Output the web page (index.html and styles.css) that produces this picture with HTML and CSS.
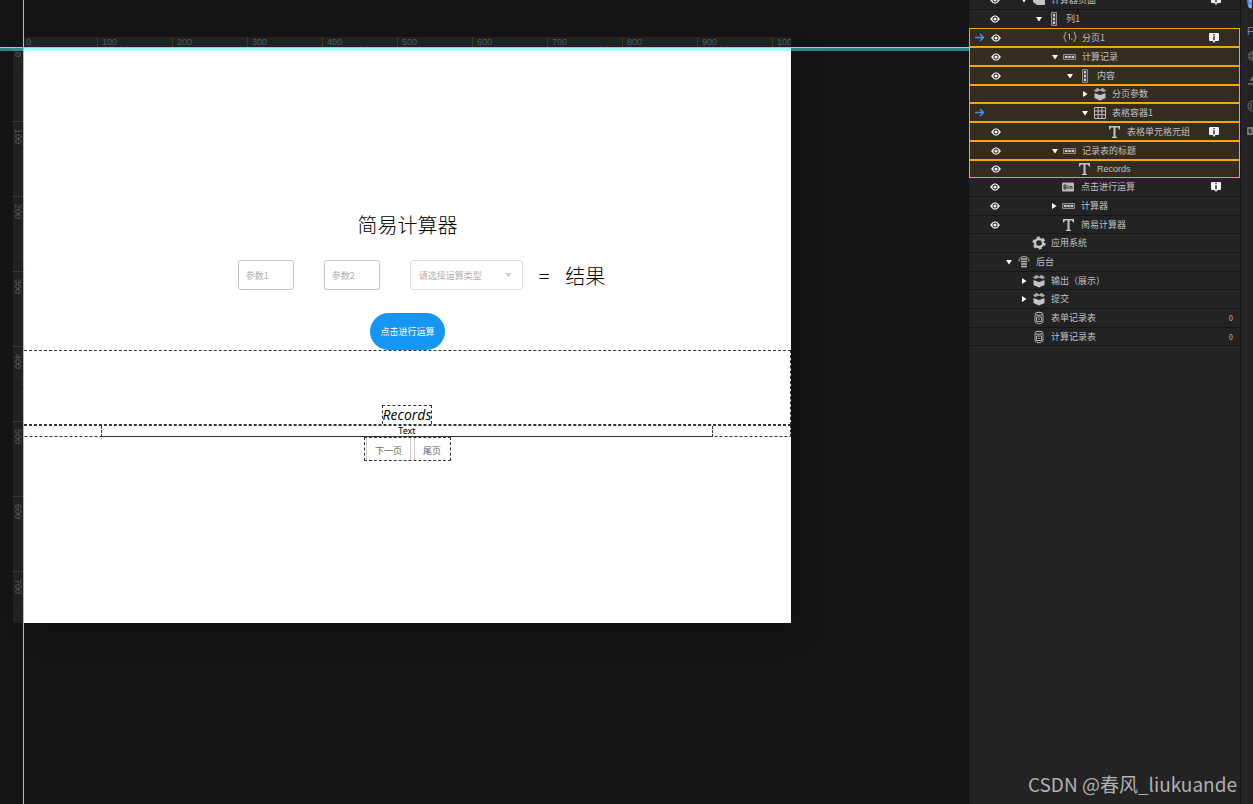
FILE: index.html
```html
<!DOCTYPE html>
<html lang="zh-CN">
<head>
<meta charset="utf-8">
<title>简易计算器</title>
<link rel="stylesheet" href="styles.css">
</head>
<body>
<svg class="sprite" aria-hidden="true">
  <symbol id="eye" viewBox="0 0 12 10"><path d="M1 5Q6-2.4 11 5Q6 12.400 1 5Z" fill="#eee"/><circle cx="6" cy="5" r="2.500" fill="#222"/><circle cx="6" cy="5" r="1.600" fill="#eee"/></symbol>
  <symbol id="down" viewBox="0 0 8 8"><path d="M1 2h6L4 6.500z" fill="#fff"/></symbol>
  <symbol id="right" viewBox="0 0 8 8"><path d="M2 1l4.500 3L2 7z" fill="#fff"/></symbol>
  <symbol id="link" viewBox="0 0 12 12"><path d="M1 5.500h8.500M6 2L9.500 5.500L6 9" fill="none" stroke="#4f8cf5" stroke-width="1.400"/></symbol>
  <symbol id="info" viewBox="0 0 12 12"><path d="M2 1h8q1 0 1 1v6q0 1-1 1H7.500L6 11L4.500 9H2q-1 0-1-1V2q0-1 1-1z" fill="#f4f4f4"/><path d="M6 2v1.300M6 4.200v4" stroke="#222" stroke-width="1.400"/></symbol>
  <symbol id="column" viewBox="0 0 16 14"><path d="M5.500 .5h5v13h-5z" fill="#444" stroke="#8e8e8e"/><path d="M7 2h2v2.500H7zM7 5.800h2v2.500H7zM7 9.600h2v2.500H7z" fill="#ccc"/></symbol>
  <symbol id="rowbox" viewBox="0 0 16 14"><path d="M1.500 4.500h12v5h-12z" fill="#444" stroke="#8e8e8e"/><path d="M3 6h2.500v2H3zM6.300 6h2.500v2H6.300zM9.600 6h2.500v2H9.600z" fill="#ccc"/></symbol>
  <symbol id="page" viewBox="0 0 16 14"><path d="M2 6L7 1h7v11H6L2 9z" fill="#c4c4c4"/><path d="M2 6h5V1" fill="none" stroke="#333"/></symbol>
  <symbol id="pager" viewBox="0 0 16 14"><path d="M4.500 1Q3 1 3 3.500T1.500 6Q3 6.500 3 8.500T4.500 10.500M11.500 1Q13 1 13 3.500T14.500 6Q13 6.500 13 8.500T11.500 10.500M6 4L7.500 3V8.500M9 8h1.500" fill="none" stroke="#b5b5b5"/></symbol>
  <symbol id="box" viewBox="0 0 16 14"><path d="M2.500 6L8 8L13.500 6v5L8 13.500L2.500 11z" fill="#c4c4c4"/><path d="M2 3.500L5.500 .8L8 2.800L10.500 .8L14 3.500L12 5L8 3.800L4 5z" fill="#aaa"/><path d="M3 5.500L8 7.500L13 5.500" fill="none" stroke="#333" stroke-width=".8"/></symbol>
  <symbol id="grid" viewBox="0 0 16 14"><path d="M2.500 1.500h11v11h-11zM2.500 5h11M2.500 8.700h11M6.200 1.500v11M9.900 1.500v11" fill="none" stroke="#c0c0c0"/></symbol>
  <symbol id="type" viewBox="0 0 16 14"><path d="M2 1h11v3.500h-1L11 2.500H8.500v9l1.500 .5v1H5v-1l1.500-.5v-9H4L3 4.500H2z" fill="#c4c4c4"/></symbol>
  <symbol id="button" viewBox="0 0 16 14"><rect x="1" y="2.500" width="12" height="9" rx="1" fill="#b9b9b9"/><path d="M3 5v4h2V5H3M3 7h2M7 6.500V9M7 5v1M9 9V6.500h2V9" fill="none" stroke="#333"/></symbol>
  <symbol id="gear" viewBox="0 0 16 14"><circle cx="8" cy="7" r="4" fill="none" stroke="#c4c4c4" stroke-width="2.400"/><circle cx="8" cy="7" r="5.700" fill="none" stroke="#c4c4c4" stroke-width="1.800" stroke-dasharray="3 2.970"/></symbol>
  <symbol id="server" viewBox="0 0 16 14"><path d="M4 6Q2 6 3.500 4Q4 1.500 8 1.500T12.500 4Q14 6 12 6" fill="none" stroke="#aaa"/><path d="M5 4h6M5 6.500h6M5 9h6M5 11.500h6" stroke="#bbb" stroke-width="1.600"/></symbol>
  <symbol id="data" viewBox="0 0 16 14"><ellipse cx="8" cy="2.800" rx="4" ry="1.500" fill="none" stroke="#bbb"/><path d="M4 4v7Q8 14.500 12 11V4M5.500 6h5v4.500h-5zM7 8.200h2" fill="none" stroke="#aaa"/></symbol>
</svg>

<main class="workspace">
  <div class="ruler ruler-x" aria-hidden="true"><span>0</span><span>100</span><span>200</span><span>300</span><span>400</span><span>500</span><span>600</span><span>700</span><span>800</span><span>900</span><span>100</span></div>
  <div class="ruler ruler-y" aria-hidden="true"><span>0</span><span>100</span><span>200</span><span>300</span><span>400</span><span>500</span><span>600</span><span>700</span></div>
  <section class="artboard">
    <h1 class="title">简易计算器</h1>
    <form class="calculator">
      <input class="field" type="text" placeholder="参数1" aria-label="参数1">
      <input class="field" type="text" placeholder="参数2" aria-label="参数2">
      <span class="picker">
        <select class="picker-select" aria-label="请选择运算类型"><option>请选择运算类型</option></select>
        <svg class="picker-caret" viewBox="0 0 8 5"><path d="M0 0h8L4 5z" fill="#c0c8dc"/></svg>
      </span>
      <span class="answer">=</span>
      <output class="answer">结果</output>
    </form>
    <button class="submit" type="button">点击进行运算</button>
    <div class="records-heading"><h2 class="records-title">Records</h2></div>
    <div class="records-body"><div class="records-table">Text</div></div>
    <nav class="pagination"><button class="page-button" type="button">下一页</button><button class="page-button" type="button">尾页</button></nav>
  </section>
  <div class="guide-x"></div>
  <div class="guide-y"></div>
</main>

<aside class="sidebar">
  <div class="tree">
    <div class="group group-top">
      <div class="row level-1"><span class="link"></span><button class="eye" aria-label="显示"><svg><use href="#eye"/></svg></button><button class="caret" aria-label="折叠"><svg><use href="#down"/></svg></button><svg class="icon"><use href="#page"/></svg><span class="label">计算器页面</span><svg class="info"><use href="#info"/></svg></div>
      <div class="row level-2"><span class="link"></span><button class="eye" aria-label="显示"><svg><use href="#eye"/></svg></button><button class="caret" aria-label="折叠"><svg><use href="#down"/></svg></button><svg class="icon"><use href="#column"/></svg><span class="label">列1</span></div>
    </div>
    <div class="group group-selected">
      <div class="row level-3"><span class="link"><svg><use href="#link"/></svg></span><button class="eye" aria-label="显示"><svg><use href="#eye"/></svg></button><span class="caret"></span><svg class="icon"><use href="#pager"/></svg><span class="label">分页1</span><svg class="info"><use href="#info"/></svg></div>
      <div class="row level-3"><span class="link"></span><button class="eye" aria-label="显示"><svg><use href="#eye"/></svg></button><button class="caret" aria-label="折叠"><svg><use href="#down"/></svg></button><svg class="icon"><use href="#rowbox"/></svg><span class="label">计算记录</span></div>
      <div class="row level-4"><span class="link"></span><button class="eye" aria-label="显示"><svg><use href="#eye"/></svg></button><button class="caret" aria-label="折叠"><svg><use href="#down"/></svg></button><svg class="icon"><use href="#column"/></svg><span class="label">内容</span></div>
      <div class="row level-5"><span class="link"></span><span class="eye"></span><button class="caret" aria-label="展开"><svg><use href="#right"/></svg></button><svg class="icon"><use href="#box"/></svg><span class="label">分页参数</span></div>
      <div class="row level-5"><span class="link"><svg><use href="#link"/></svg></span><span class="eye"></span><button class="caret" aria-label="折叠"><svg><use href="#down"/></svg></button><svg class="icon"><use href="#grid"/></svg><span class="label">表格容器1</span></div>
      <div class="row level-6"><span class="link"></span><button class="eye" aria-label="显示"><svg><use href="#eye"/></svg></button><span class="caret"></span><svg class="icon"><use href="#type"/></svg><span class="label">表格单元格元组</span><svg class="info"><use href="#info"/></svg></div>
      <div class="row level-3"><span class="link"></span><button class="eye" aria-label="显示"><svg><use href="#eye"/></svg></button><button class="caret" aria-label="折叠"><svg><use href="#down"/></svg></button><svg class="icon"><use href="#rowbox"/></svg><span class="label">记录表的标题</span></div>
      <div class="row level-4"><span class="link"></span><button class="eye" aria-label="显示"><svg><use href="#eye"/></svg></button><span class="caret"></span><svg class="icon"><use href="#type"/></svg><span class="label label-latin">Records</span></div>
    </div>
    <div class="group group-rest">
      <div class="row level-3"><span class="link"></span><button class="eye" aria-label="显示"><svg><use href="#eye"/></svg></button><span class="caret"></span><svg class="icon"><use href="#button"/></svg><span class="label">点击进行运算</span><svg class="info"><use href="#info"/></svg></div>
      <div class="row level-3"><span class="link"></span><button class="eye" aria-label="显示"><svg><use href="#eye"/></svg></button><button class="caret" aria-label="展开"><svg><use href="#right"/></svg></button><svg class="icon"><use href="#rowbox"/></svg><span class="label">计算器</span></div>
      <div class="row level-3"><span class="link"></span><button class="eye" aria-label="显示"><svg><use href="#eye"/></svg></button><span class="caret"></span><svg class="icon"><use href="#type"/></svg><span class="label">简易计算器</span></div>
      <div class="row level-1"><span class="link"></span><span class="eye"></span><span class="caret"></span><svg class="icon"><use href="#gear"/></svg><span class="label">应用系统</span></div>
      <div class="row level-0"><span class="link"></span><span class="eye"></span><button class="caret" aria-label="折叠"><svg><use href="#down"/></svg></button><svg class="icon"><use href="#server"/></svg><span class="label">后台</span></div>
      <div class="row level-1"><span class="link"></span><span class="eye"></span><button class="caret" aria-label="展开"><svg><use href="#right"/></svg></button><svg class="icon"><use href="#box"/></svg><span class="label">输出（展示）</span></div>
      <div class="row level-1"><span class="link"></span><span class="eye"></span><button class="caret" aria-label="展开"><svg><use href="#right"/></svg></button><svg class="icon"><use href="#box"/></svg><span class="label">提交</span></div>
      <div class="row level-1"><span class="link"></span><span class="eye"></span><span class="caret"></span><svg class="icon"><use href="#data"/></svg><span class="label">表单记录表</span><span class="count">0</span></div>
      <div class="row level-1"><span class="link"></span><span class="eye"></span><span class="caret"></span><svg class="icon"><use href="#data"/></svg><span class="label">计算记录表</span><span class="count">0</span></div>
    </div>
  </div>
  <p class="watermark">CSDN @春风_liukuande</p>
</aside>

<nav class="rail">
  <svg viewBox="0 0 12 12"><path d="M0 0h5v9l-4-2z" fill="#4f8cf5"/><path d="M2 1h3M3 4v4" stroke="#bcd2ff"/></svg>
  <span class="rail-text">F</span>
  <svg viewBox="0 0 12 12"><circle cx="6" cy="6" r="5" fill="#6a6a6a"/><path d="M0 6h12M4 1v10" stroke="#2d2d2d"/></svg>
  <svg viewBox="0 0 12 12"><path d="M1 9h10M3 5h8M5 2v3" fill="none" stroke="#777" stroke-width="1.500"/></svg>
  <svg viewBox="0 0 12 12"><circle cx="6" cy="6" r="5" fill="none" stroke="#777"/><path d="M4 3v6" stroke="#777"/></svg>
  <svg viewBox="0 0 12 12"><rect y="2" width="12" height="8" rx="1" fill="#777"/><path d="M4 4.500H2V6h2v1.500H2" fill="none" stroke="#222"/></svg>
</nav>
</body>
</html>
```
FILE: styles.css
```css
* { box-sizing: border-box; }

body {
  display: flex;
  min-height: 100vh;
  margin: 0;
  overflow: hidden;
  background: #151515;
  color: #c0c0c0;
  font-family: "Noto Sans CJK SC", "Noto Sans", sans-serif;
  font-size: 9px;
}

button {
  padding: 0;
  border: 0;
  background: none;
  color: inherit;
  font: inherit;
}

h1, h2, p { margin: 0; }

.sprite {
  position: absolute;
  width: 0;
  height: 0;
}

/* Workspace */
.workspace {
  position: relative;
  flex: 1;
  min-width: 0;
  display: grid;
  grid-template-columns: 11px 1fr;
  grid-template-rows: 11px auto;
  align-content: start;
  padding: 37px 178px 40px 13px;
  overflow: hidden;
}

.ruler {
  display: flex;
  overflow: hidden;
  background-color: #232323;
  color: #5c5c5c;
  font-family: "Liberation Sans", sans-serif;
  line-height: 11px;
}

.ruler span {
  flex: none;
}

.ruler-x {
  grid-column: 2;
  background-image: linear-gradient(90deg, #303030 1px, transparent 1px, transparent 8px, #2c2c2c 8px, #2c2c2c 9px, transparent 9px);
  background-position: -2px 8px;
  background-repeat: repeat-x;
  background-size: 15px 3px;
}

.ruler-x span {
  width: 75px;
  padding-left: 4px;
  border-left: 1px solid #4a3820;
}

.ruler-x span:first-child {
  width: 73px;
  padding-left: 2px;
  border: 0;
}

.ruler-y {
  grid-column: 1;
  flex-direction: column;
  height: 0;
  min-height: 100%;
  background-image: linear-gradient(#303030 1px, transparent 1px, transparent 8px, #2c2c2c 8px, #2c2c2c 9px, transparent 9px);
  background-position: 7px -2px;
  background-repeat: repeat-y;
  background-size: 3px 15px;
}

.ruler-y span {
  width: 10px;
  height: 75px;
  padding-top: 7px;
  border-top: 1px solid #4a3820;
  line-height: 10px;
  writing-mode: vertical-rl;
}

.ruler-y span:first-child {
  height: 73px;
  padding-top: 4px;
  border: 0;
}

.artboard {
  display: flex;
  flex-direction: column;
  align-items: center;
  min-height: 575px;
  padding-top: 162px;
  background: #fff;
  box-shadow: 8px 10px 30px rgba(0, 0, 0, .2);
  color: #000;
}

.title {
  font-size: 20px;
  font-weight: 300;
  line-height: 30px;
}

.calculator {
  display: flex;
  align-items: flex-start;
  gap: 16px;
  margin-top: 20px;
  padding-left: 28px;
}

.field {
  width: 56px;
  height: 30px;
  margin-right: 14px;
  padding: 0 7px;
  border: 1px solid #c4c4c4;
  border-radius: 3px;
  background: #fff;
  font: inherit;
}

.field::placeholder { color: #b0b0b0; }

.picker {
  position: relative;
  width: 113px;
}

.picker-select {
  display: block;
  width: 100%;
  height: 30px;
  padding: 0 8px;
  border: 1px solid #dcdfe6;
  border-radius: 3px;
  appearance: none;
  background: #fff;
  color: #b0b0b0;
  font: inherit;
}

.picker-caret {
  position: absolute;
  top: 13px;
  right: 11px;
  width: 7px;
  height: 4px;
}

.answer {
  height: 30px;
  font-size: 20px;
  font-weight: 300;
  line-height: 32px;
}

.submit {
  width: 75px;
  height: 37px;
  margin-top: 23px;
  border-radius: 19px;
  background: #1696f3;
  color: #fff;
}

.records-heading {
  align-self: stretch;
  display: flex;
  justify-content: center;
  align-items: flex-end;
  height: 75px;
  border: 1px dashed #333;
  border-left: 0;
}

.records-title {
  border: 1px dashed #333;
  border-bottom: 0;
  font-family: "Open Sans", sans-serif;
  font-size: 14px;
  font-style: italic;
  font-weight: 400;
  line-height: 18px;
}

.records-body {
  align-self: stretch;
  display: flex;
  justify-content: center;
  border: 1px dashed #333;
  border-width: 1px 1px 0 0;
  background: linear-gradient(90deg, #333 3px, transparent 3px) bottom / 5px 1px repeat-x;
}

.records-table {
  width: 80%;
  border: 1px dashed #333;
  border-style: solid dashed;
  border-top: 0;
  font-family: "Noto Sans", sans-serif;
  line-height: 10px;
  text-align: center;
}

.pagination {
  display: flex;
  gap: 3px;
  padding: 0 1px;
  border: 1px dashed #333;
}

.page-button {
  height: 22px;
  padding: 3px 8px 0;
  border: solid #ccc;
  border-width: 0 1px;
  color: #666;
}

.page-button:last-child { border-right: 0; }

.guide-x {
  position: absolute;
  top: 47px;
  left: 0;
  right: 0;
  height: 4px;
  border-top: 1px solid #40f6f6;
  background: rgba(64, 250, 255, .5);
}

.guide-y {
  position: absolute;
  top: 0;
  bottom: 0;
  left: 23px;
  width: 1px;
  background: #40f0f0;
}

/* Layer tree */
.sidebar {
  flex: none;
  display: flex;
  flex-direction: column;
  justify-content: space-between;
  width: 272px;
  border-right: 1px solid #161616;
  background: #232323;
}

.tree { margin-top: -9px; }

.row {
  display: flex;
  align-items: center;
  height: 19px;
  padding-right: 18px;
  border-bottom: 1px solid #161616;
  line-height: 16px;
}

.group-top .row:last-child,
.group-selected .row:nth-child(4n),
.group-rest .row:nth-child(3n) { height: 18px; }

.group-top .row:last-child { border-bottom: 0; }

.group-selected .row {
  border: 1px solid #ffa500;
  background: #352c20;
}

.link {
  flex: none;
  width: 20px;
  padding-left: 4px;
}

.link svg {
  display: block;
  width: 12px;
  height: 12px;
}

.eye {
  flex: none;
  width: 12px;
}

.eye svg {
  display: block;
  width: 12px;
  height: 10px;
}

.caret {
  flex: none;
  width: 10px;
  padding-left: 1px;
}

.caret svg {
  display: block;
  width: 8px;
  height: 8px;
}

.level-0 .caret { margin-left: 3px; }
.level-1 .caret { margin-left: 18px; }
.level-2 .caret { margin-left: 33px; }
.level-3 .caret { margin-left: 48px; }
.level-4 .caret { margin-left: 63px; }
.level-5 .caret { margin-left: 78px; }
.level-6 .caret { margin-left: 93px; }

.icon {
  flex: none;
  width: 16px;
  height: 14px;
  margin: 0 4px 0 2px;
}

.label {
  flex: 1;
  white-space: nowrap;
}

.label-latin { font-family: "Liberation Sans", sans-serif; }

.info {
  flex: none;
  width: 12px;
  height: 12px;
}

.group-selected .info { margin-right: 1px; }

.count {
  margin-right: -11px;
  font-size: 7px;
}

.watermark {
  padding: 0 3px 6px;
  color: #b0b0b0;
  font-size: 19px;
  line-height: 28px;
  text-align: right;
  white-space: nowrap;
}

/* Right tool rail */
.rail {
  flex: none;
  display: flex;
  flex-direction: column;
  gap: 13px;
  width: 12px;
  padding-left: 6px;
  overflow: hidden;
  background: #232323;
}

.rail svg {
  flex: none;
  width: 12px;
  height: 12px;
}

.rail-text {
  color: #4f8cf5;
  font-family: "Liberation Sans", sans-serif;
  font-size: 11px;
  line-height: 12px;
}
```
